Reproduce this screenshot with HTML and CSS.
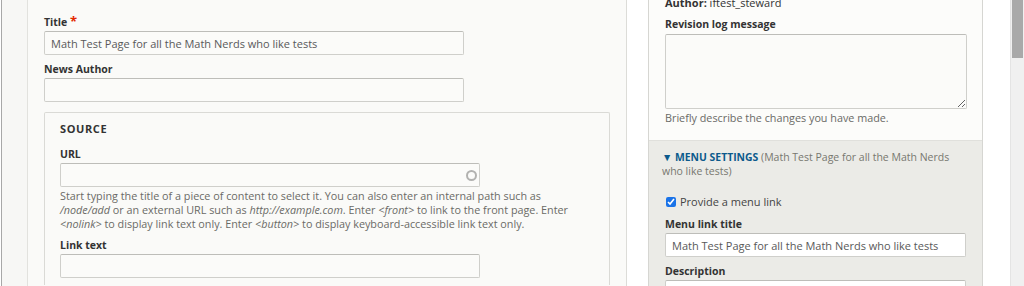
FILE: index.html
```html
<!DOCTYPE html>
<html lang="en">
<head>
  <meta charset="UTF-8">
  <meta name="viewport" content="width=device-width, initial-scale=1.0">
  <title>Edit Basic page</title>
  <link rel="stylesheet" href="styles.css">
</head>
<body>
  <div class="screen">
    <div class="gutter"></div>

    <main class="main">
      <div class="form-item">
        <label class="form-label" for="title">Title <span class="required">*</span></label>
        <input class="form-text" type="text" id="title" value="Math Test Page for all the Math Nerds who like tests">
      </div>

      <div class="form-item form-item-last">
        <label class="form-label" for="news-author">News Author</label>
        <input class="form-text" type="text" id="news-author">
      </div>

      <fieldset class="fieldset">
        <div class="fieldset-title">Source</div>

        <div class="form-item">
          <label class="form-label" for="url">URL</label>
          <div class="autocomplete">
            <input class="form-text" type="text" id="url">
            <span class="throbber"></span>
          </div>
          <div class="description">
            Start typing the title of a piece of content to select it. You can also enter an internal path such as
            <em>/node/add</em> or an external URL such as <em>http://example.com</em>. Enter <em>&lt;front&gt;</em> to link to the front page. Enter
            <em>&lt;nolink&gt;</em> to display link text only. Enter <em>&lt;button&gt;</em> to display keyboard-accessible link text only.
          </div>
        </div>

        <div class="form-item">
          <label class="form-label" for="link-text">Link text</label>
          <input class="form-text" type="text" id="link-text">
        </div>
      </fieldset>
    </main>

    <div class="spacer"></div>

    <aside class="sidebar">
      <div class="meta">
        <div class="author"><strong>Author:</strong> iftest_steward</div>
        <div class="form-item">
          <label class="form-label" for="revision-log">Revision log message</label>
          <textarea class="form-textarea" id="revision-log"></textarea>
          <div class="description">Briefly describe the changes you have made.</div>
        </div>
      </div>

      <div class="menu-settings">
        <div class="summary">
          <span class="summary-title">&#9660; Menu settings</span>
          <span class="summary-info">(Math Test Page for all the Math Nerds who like tests)</span>
        </div>

        <div class="form-check">
          <input type="checkbox" id="menu-link" checked>
          <label for="menu-link">Provide a menu link</label>
        </div>

        <div class="form-item">
          <label class="form-label" for="menu-title">Menu link title</label>
          <input class="form-text form-text-white" type="text" id="menu-title" value="Math Test Page for all the Math Nerds who like tests">
        </div>

        <div class="form-item">
          <label class="form-label" for="menu-desc">Description</label>
          <input class="form-text form-text-white" type="text" id="menu-desc">
        </div>
      </div>
    </aside>

    <div class="spacer spacer-right"></div>

    <div class="scrollbar"><div class="scrollbar-thumb"></div></div>
  </div>
</body>
</html>
```

FILE: styles.css
```css
html, body { margin: 0; height: 286px; overflow: hidden; background: #fff; }
body { font-family: "Open Sans", "Noto Sans", sans-serif; font-size: 11px; line-height: 14px; color: #333; }

.screen { display: flex; height: 286px; align-items: stretch; }

.gutter { width: 25px; margin-left: 1px; border-left: 1px solid #a8a8a8; background: #f7f7f5; flex: none; }

.main { width: 600px; flex: none; box-sizing: border-box; padding: 14px 16px 0 16px; background: #fafaf8; border-left: 1px solid #e2e2de; border-right: 1px solid #dcdcd8; }

.spacer { width: 21px; flex: none; background: #fff; }
.spacer-right { width: 27px; }

/* form items */
.form-item { margin-bottom: 7px; }
.form-item-last { margin-bottom: 10px; }
.form-label { display: block; font-size: 10.5px; font-weight: bold; margin-bottom: 2px; color: #333; }
.required { color: #e32700; font-size: 13px; }

.form-text { display: block; box-sizing: border-box; width: 420px; height: 24px; margin: 0; padding: 0 6px; font-family: inherit; font-size: 11px; color: #595959; background: #fbfbf9; border: 1px solid #cfcfcb; border-top-color: #bdbdb9; border-radius: 2px; outline: none; }
.form-text-white { width: 301px; background: #fcfcfa; }

.description { margin-top: 2px; font-size: 10.8px; line-height: 14px; color: #6a6a66; }
.description em { font-style: italic; }

/* fieldset */
.fieldset { margin: 0; padding: 9px 24px 0 15px; border: 1px solid #dadad6; border-bottom: none; border-radius: 2px 2px 0 0; min-width: 0; }
.fieldset-title { font-weight: bold; text-transform: uppercase; letter-spacing: 0.6px; margin-bottom: 11px; color: #333; }

.autocomplete { position: relative; width: 420px; }
.throbber { position: absolute; right: 3px; top: 7px; width: 7px; height: 7px; border: 2px solid #b2b2b0; border-radius: 50%; }

/* sidebar */
.sidebar { width: 335px; flex: none; box-sizing: border-box; display: flex; flex-direction: column; border-left: 1px solid #d6d6d2; border-right: 1px solid #d6d6d2; background: #fcfcfa; }

.meta { flex: none; height: 140px; box-sizing: border-box; padding: 0 15px 0 16px; }
.author { margin-top: -4px; margin-bottom: 7px; color: #333; }
.author strong { font-weight: bold; }
.meta .form-label { margin-bottom: 3px; }
.form-textarea { display: block; box-sizing: border-box; width: 302px; height: 75px; margin: 0; padding: 4px 6px; font-family: inherit; font-size: 11px; background: #fbfbf9; border: 1px solid #cfcfcb; border-top-color: #bdbdb9; border-radius: 2px; resize: vertical; outline: none; }

.menu-settings { flex: 1; background: #ebebe7; border-top: 1px solid #e0e0dc; padding: 9px 14px 0 16px; }
.summary { margin-left: -3px; margin-bottom: 17px; font-size: 10.5px; }
.summary-title { font-size: 10.4px; font-weight: bold; text-transform: uppercase; color: #0b5a8c; }
.summary-info { color: #77776f; }

.form-check { display: flex; align-items: center; gap: 4px; margin-bottom: 8px; }
.form-check input { width: 10px; height: 10px; margin: 0 0 0 1px; accent-color: #1a73e8; }
.form-check label { color: #444; }

.menu-settings .form-item { margin-bottom: 7px; }
.menu-settings .form-text { background: #fff; }

/* scrollbar */
.scrollbar { width: 14px; flex: none; background: #f0f0f0; border-left: 1px solid #e4e4e4; box-sizing: border-box; }
.scrollbar-thumb { width: 11px; height: 58px; margin-left: 1px; background: #a9a9a9; }
```
